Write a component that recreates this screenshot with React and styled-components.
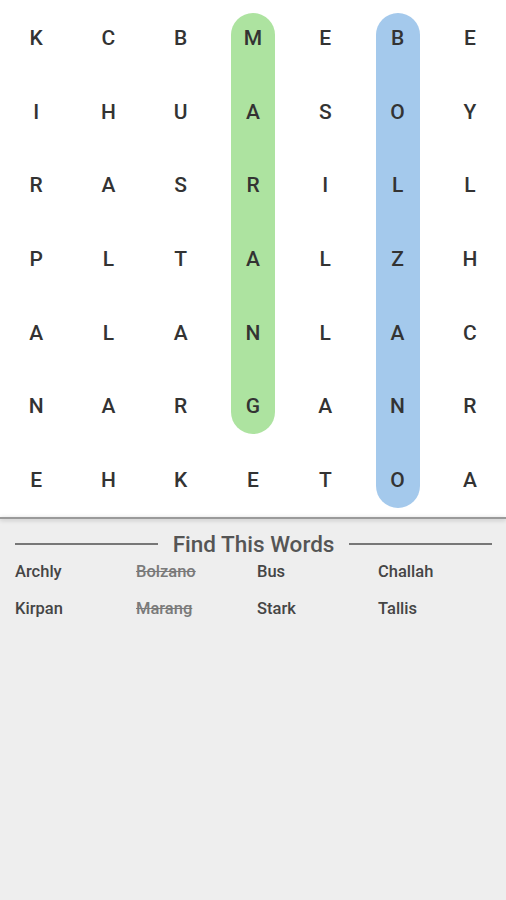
import React from "react";
import styled, { createGlobalStyle } from "styled-components";

const GlobalStyle = createGlobalStyle`
  html, body {
    margin: 0;
    padding: 0;
    background: #eeeeee;
    font-family: Roboto, "Noto Sans", sans-serif;
  }
  #root {
    min-height: 900px;
  }
`;

const grid = [
  "KCBMEBE",
  "IHUASOY",
  "RASRILL",
  "PLTALZH",
  "ALANLAC",
  "NARGANR",
  "EHKETOA",
];

// found words: column, first row, last row, colour
const found = [
  { col: 3, from: 0, to: 5, color: "#ade3a0" },
  { col: 5, from: 0, to: 6, color: "#a4c9ec" },
];

const words = [
  { text: "Archly", done: false },
  { text: "Bolzano", done: true },
  { text: "Bus", done: false },
  { text: "Challah", done: false },
  { text: "Kirpan", done: false },
  { text: "Marang", done: true },
  { text: "Stark", done: false },
  { text: "Tallis", done: false },
];

function foundAt(r, c) {
  return found.find((w) => w.col === c && r >= w.from && r <= w.to);
}

function pillPart(f, r) {
  if (r === f.from) return "top";
  if (r === f.to) return "bottom";
  return "middle";
}

export default function App() {
  return (
    <>
      <GlobalStyle />
      <Page>
        <Board>
          {grid.map((row, r) =>
            row.split("").map((ch, c) => {
              const f = foundAt(r, c);
              return (
                <Cell key={`${r}-${c}`}>
                  {f && <Pill $color={f.color} $part={pillPart(f, r)} />}
                  <Letter>{ch}</Letter>
                </Cell>
              );
            })
          )}
        </Board>
        <Divider />
        <WordsPanel>
          <Heading>
            <Rule />
            <HeadingText>Find This Words</HeadingText>
            <Rule />
          </Heading>
          <WordList>
            {words.map((w) => (
              <Word key={w.text} $done={w.done}>
                {w.text}
              </Word>
            ))}
          </WordList>
        </WordsPanel>
      </Page>
    </>
  );
}

const Page = styled.div`
  width: 506px;
  height: 900px;
  display: flex;
  flex-direction: column;
  background: #eeeeee;
`;

const Board = styled.div`
  display: grid;
  grid-template-columns: repeat(7, 1fr);
  grid-template-rows: repeat(7, 73.7px);
  background: #ffffff;
  padding-top: 1px;
`;

const Cell = styled.div`
  position: relative;
  display: flex;
  align-items: center;
  justify-content: center;
`;

const Pill = styled.div`
  position: absolute;
  left: 50%;
  width: 44px;
  margin-left: -22px;
  background: ${(p) => p.$color};
  top: ${(p) => (p.$part === "top" ? "12px" : "0")};
  bottom: ${(p) => (p.$part === "bottom" ? "9px" : "0")};
  border-radius: ${(p) =>
    p.$part === "top"
      ? "22px 22px 0 0"
      : p.$part === "bottom"
      ? "0 0 22px 22px"
      : "0"};
`;

const Letter = styled.span`
  position: relative;
  font-size: 21px;
  font-weight: 500;
  color: #333333;
`;

const Divider = styled.div`
  height: 2px;
  background: #9a9a9a;
  box-shadow: 0 1px 4px rgba(0, 0, 0, 0.25);
  position: relative;
`;

const WordsPanel = styled.div`
  padding: 11px 14px 0 15px;
`;

const Heading = styled.div`
  display: flex;
  align-items: center;
  gap: 15px;
`;

const Rule = styled.div`
  flex: 1;
  height: 1.5px;
  background: #777777;
`;

const HeadingText = styled.div`
  font-size: 22.5px;
  font-weight: 500;
  color: #555555;
  line-height: 28px;
`;

const WordList = styled.div`
  display: grid;
  grid-template-columns: repeat(4, 121px);
  row-gap: 17px;
  margin-top: 4px;
`;

const Word = styled.div`
  font-size: 16.5px;
  font-weight: 500;
  line-height: 20px;
  color: ${(p) => (p.$done ? "#7a7a7a" : "#454545")};
  text-decoration: ${(p) => (p.$done ? "line-through" : "none")};
`;
